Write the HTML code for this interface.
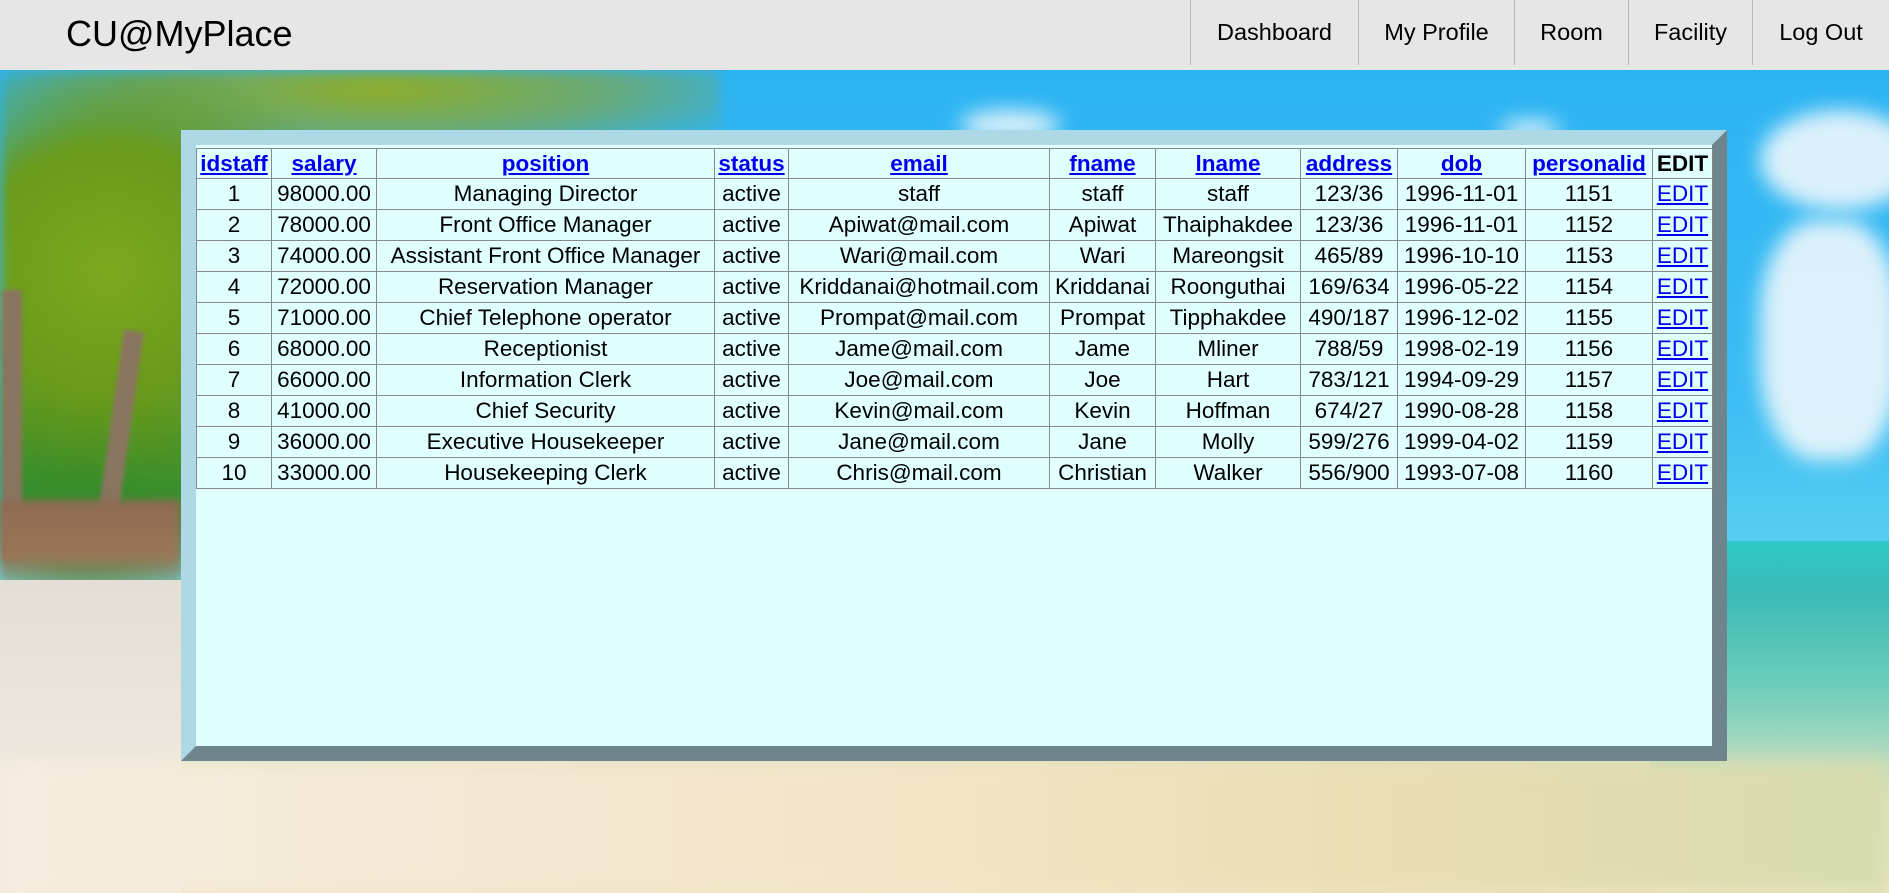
<!DOCTYPE html>
<html><head><meta charset="utf-8">
<style>
*{box-sizing:border-box}
html,body{margin:0;padding:0;width:1889px;height:893px;overflow:hidden;font-family:"Liberation Sans",Arial,sans-serif}
body{position:relative;background:#f3ead8}
.bg{position:absolute;left:0;top:70px;width:1889px;height:823px;overflow:hidden;
background:linear-gradient(180deg,#2cb4f2 0%,#3cbdf4 40%,#58cdf0 57%,#cfe0c0 72%,#f1e6c8 100%)}
.sea{position:absolute;left:1650px;top:471px;width:239px;height:260px;background:linear-gradient(180deg,#2ec9c9 0%,#3cbab7 20%,#6ccdbb 55%,rgba(210,220,180,0) 100%)}
.palm{position:absolute;left:0;top:0;width:720px;height:520px;filter:blur(6px);background:
radial-gradient(ellipse 250px 230px at 110px 200px,#7aa81e 0%,#6a9a1a 55%,rgba(90,130,30,0) 100%),
radial-gradient(ellipse 420px 80px at 380px 20px,#8fae2a 0%,rgba(140,160,40,.6) 55%,rgba(0,0,0,0) 100%),
radial-gradient(ellipse 180px 140px at 90px 400px,#2e8a2a 0%,#3b8f2f 60%,rgba(40,120,40,0) 100%);}
.trunk{position:absolute;background:#8a7560;width:20px;height:200px;filter:blur(2px)}
.roots{position:absolute;left:0;top:430px;width:181px;height:90px;filter:blur(4px);background:linear-gradient(180deg,#8d6a52,#9a7558 60%,rgba(220,210,200,0))}
.sand{position:absolute;left:0;top:510px;width:181px;height:313px;background:linear-gradient(180deg,#e3ded6,#ece6dc 50%,#f4ecdc)}
.sand2{position:absolute;left:0;top:690px;width:1889px;height:133px;filter:blur(10px);background:linear-gradient(90deg,#f5ede0 0%,#f3e4c5 50%,#e8ddb0 75%,#d6dcae 100%)}
.cloud{position:absolute;background:#eef7fc;border-radius:50%;filter:blur(10px);opacity:.9}
.hdr{position:absolute;left:0;top:0;width:1889px;height:70px;background:#e6e6e6}
.title{position:absolute;left:66px;top:13px;font-size:36px;color:#000}
.nav{position:absolute;top:0;height:65px;border-left:1px solid #b8b8b8;font-size:23.5px;line-height:64px;text-align:center;color:#000}
.panel{position:absolute;left:181px;top:130px;width:1546px;height:631px;border:15px solid;border-color:#add8e6 #6f858d #6f858d #add8e6;background:#e0ffff}
table{position:absolute;left:0;top:3px;width:1516px;border-collapse:collapse;table-layout:fixed;font-size:22.5px;border:1px solid #333}
td,th{border:1px solid #888;height:31px;padding:0;text-align:center;white-space:nowrap;overflow:hidden;color:#000;font-weight:normal}
th{font-weight:bold;height:30px}
a{color:#0000ee;text-decoration:underline}
</style></head><body>
<div class="bg">
 <div class="cloud" style="left:960px;top:40px;width:100px;height:30px"></div>
 <div class="cloud" style="left:1760px;top:40px;width:160px;height:100px"></div>
 <div class="cloud" style="left:1760px;top:150px;width:140px;height:240px;border-radius:40%"></div>
 <div class="cloud" style="left:1500px;top:50px;width:60px;height:20px"></div>
 <div class="palm"></div>
 <div class="trunk" style="left:110px;top:260px;transform:rotate(8deg)"></div>
 <div class="trunk" style="left:2px;top:220px;height:270px"></div>
 <div class="roots"></div>
 <div class="sand"></div>
 <div class="sea"></div>
 <div class="sand2"></div>
</div>
<div class="hdr">
 <div class="title">CU@MyPlace</div>
 <div class="nav" style="left:1190px;width:168px">Dashboard</div>
 <div class="nav" style="left:1358px;width:156px">My Profile</div>
 <div class="nav" style="left:1514px;width:114px">Room</div>
 <div class="nav" style="left:1628px;width:124px">Facility</div>
 <div class="nav" style="left:1752px;width:137px">Log Out</div>
</div>
<div class="panel">
<table>
<colgroup><col style="width:75px"><col style="width:105px"><col style="width:338px"><col style="width:74px"><col style="width:261px"><col style="width:106px"><col style="width:145px"><col style="width:97px"><col style="width:128px"><col style="width:127px"><col style="width:60px"></colgroup>
<tr><th><a>idstaff</a></th><th><a>salary</a></th><th><a>position</a></th><th><a>status</a></th><th><a>email</a></th><th><a>fname</a></th><th><a>lname</a></th><th><a>address</a></th><th><a>dob</a></th><th><a>personalid</a></th><th>EDIT</th></tr>
<tr><td>1</td><td>98000.00</td><td>Managing Director</td><td>active</td><td>staff</td><td>staff</td><td>staff</td><td>123/36</td><td>1996-11-01</td><td>1151</td><td><a>EDIT</a></td></tr>
<tr><td>2</td><td>78000.00</td><td>Front Office Manager</td><td>active</td><td>Apiwat@mail.com</td><td>Apiwat</td><td>Thaiphakdee</td><td>123/36</td><td>1996-11-01</td><td>1152</td><td><a>EDIT</a></td></tr>
<tr><td>3</td><td>74000.00</td><td>Assistant Front Office Manager</td><td>active</td><td>Wari@mail.com</td><td>Wari</td><td>Mareongsit</td><td>465/89</td><td>1996-10-10</td><td>1153</td><td><a>EDIT</a></td></tr>
<tr><td>4</td><td>72000.00</td><td>Reservation Manager</td><td>active</td><td>Kriddanai@hotmail.com</td><td>Kriddanai</td><td>Roonguthai</td><td>169/634</td><td>1996-05-22</td><td>1154</td><td><a>EDIT</a></td></tr>
<tr><td>5</td><td>71000.00</td><td>Chief Telephone operator</td><td>active</td><td>Prompat@mail.com</td><td>Prompat</td><td>Tipphakdee</td><td>490/187</td><td>1996-12-02</td><td>1155</td><td><a>EDIT</a></td></tr>
<tr><td>6</td><td>68000.00</td><td>Receptionist</td><td>active</td><td>Jame@mail.com</td><td>Jame</td><td>Mliner</td><td>788/59</td><td>1998-02-19</td><td>1156</td><td><a>EDIT</a></td></tr>
<tr><td>7</td><td>66000.00</td><td>Information Clerk</td><td>active</td><td>Joe@mail.com</td><td>Joe</td><td>Hart</td><td>783/121</td><td>1994-09-29</td><td>1157</td><td><a>EDIT</a></td></tr>
<tr><td>8</td><td>41000.00</td><td>Chief Security</td><td>active</td><td>Kevin@mail.com</td><td>Kevin</td><td>Hoffman</td><td>674/27</td><td>1990-08-28</td><td>1158</td><td><a>EDIT</a></td></tr>
<tr><td>9</td><td>36000.00</td><td>Executive Housekeeper</td><td>active</td><td>Jane@mail.com</td><td>Jane</td><td>Molly</td><td>599/276</td><td>1999-04-02</td><td>1159</td><td><a>EDIT</a></td></tr>
<tr><td>10</td><td>33000.00</td><td>Housekeeping Clerk</td><td>active</td><td>Chris@mail.com</td><td>Christian</td><td>Walker</td><td>556/900</td><td>1993-07-08</td><td>1160</td><td><a>EDIT</a></td></tr>
</table>
</div>
</body></html>
